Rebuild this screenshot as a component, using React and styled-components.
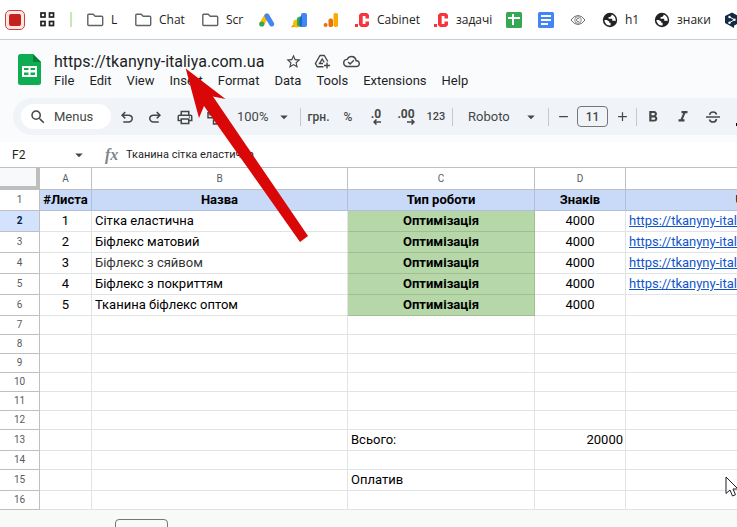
import React from 'react';
import styled, { createGlobalStyle, css } from 'styled-components';
import {
  MdSearch,
  MdStarBorder,
  MdOutlineCloudDone,
  MdArrowDropDown,
  MdFormatBold,
  MdFormatItalic,
  MdAdd,
  MdRemove,
} from 'react-icons/md';

const GlobalStyle = createGlobalStyle`
  * {
    box-sizing: border-box;
  }
  body {
    margin: 0;
    background: #f8faf7;
    font-family: Roboto, "Liberation Sans", sans-serif;
    overflow: hidden;
  }
  button, input {
    font-family: inherit;
  }
`;

const Page = styled.div`
  position: relative;
  display: flex;
  flex-direction: column;
  width: 100%;
  overflow: hidden;
`;

/* bookmarks */

const BookmarkBar = styled.nav`
  display: flex;
  align-items: center;
  height: 40px;
  padding-left: 5px;
  background: #fff;
  border-bottom: 1px solid #c9cfca;
  white-space: nowrap;
`;

const BarButton = styled.button`
  display: flex;
  flex: none;
  padding: 0;
  margin-right: 15px;
  background: none;
  border: 0;
  cursor: pointer;
`;

const BarDivider = styled.span`
  flex: none;
  width: 2px;
  height: 15px;
  margin-right: 15px;
  background: #c5e8b7;
`;

const Bookmark = styled.a`
  display: flex;
  flex: none;
  align-items: center;
  gap: 7px;
  width: ${(p) => p.$width || 32}px;
  color: #1f2220;
  font-family: "Open Sans", "Noto Sans", sans-serif;
  font-size: 12px;
  line-height: 16px;
  text-decoration: none;

  svg {
    flex: none;
  }
`;

/* document header */

const Header = styled.header`
  display: flex;
  height: 58px;
  padding: 12px 0 0 16px;
  background: #f9fbfd;
`;

const DocInfo = styled.div`
  display: flex;
  flex-direction: column;
  padding-left: 8px;
`;

const TitleRow = styled.div`
  display: flex;
  align-items: center;
  height: 19px;
  padding-left: 2px;
`;

const Title = styled.h1`
  min-width: 215px;
  margin: 0 16px 0 0;
  color: #1f1f1f;
  font-size: 16px;
  font-weight: 400;
  line-height: 19px;
`;

const TitleActions = styled.div`
  display: flex;
  gap: 12px;
  color: #444746;
`;

const MenuBar = styled.div`
  display: flex;
  height: 20px;
  gap: 15px;
  padding-left: 2px;
`;

const MenuItem = styled.button`
  padding: 0;
  background: none;
  border: 0;
  color: #1f1f1f;
  font-size: 13px;
  line-height: 18px;
  cursor: pointer;
`;

/* toolbar */

const ToolbarWrap = styled.div`
  padding: 0 0 7px 13px;
  background: #f9fbfd;
`;

const Toolbar = styled.div`
  display: flex;
  align-items: center;
  height: 37px;
  padding-left: 8px;
  background: #f0f4f9;
  border-radius: 19px 0 0 19px;
  color: #444746;
  overflow: hidden;
`;

const MenuSearch = styled.button`
  display: flex;
  flex: none;
  align-items: center;
  gap: 7px;
  width: 90px;
  height: 25px;
  margin-right: 2px;
  padding: 0 8px;
  background: #fff;
  border: 0;
  border-radius: 13px;
  color: #444746;
  font-size: 13px;
`;

const Tool = styled.button`
  display: flex;
  flex: none;
  align-items: center;
  justify-content: center;
  width: ${(p) => p.$width || 28}px;
  height: 28px;
  padding: 0;
  background: none;
  border: 0;
  color: #444746;
  font-size: ${(p) => p.$size || 13}px;
  font-weight: ${(p) => (p.$strong ? 500 : 400)};
  cursor: pointer;
`;

const DropTool = styled(Tool)`
  justify-content: space-between;
  padding: 0 ${(p) => p.$right}px 0 ${(p) => p.$left}px;
`;

const ToolDivider = styled.span`
  flex: none;
  width: 1px;
  height: 18px;
  background: #c7c7c7;
`;

const Decimal = styled.span`
  display: flex;
  flex-direction: column;
  align-items: flex-end;
  font-size: 12px;
  font-weight: 700;
  line-height: 10px;
`;

const SizeInput = styled.input`
  flex: none;
  width: 31px;
  height: 21px;
  padding: 0;
  background: transparent;
  border: 1px solid #747775;
  border-radius: 4px;
  color: #444746;
  font-size: 12px;
  font-weight: 500;
  text-align: center;
`;

const TextColor = styled.span`
  width: 14px;
  height: 3px;
  margin-top: 16px;
  background: #000;
`;

/* formula bar */

const FormulaBar = styled.div`
  display: flex;
  align-items: center;
  height: 26px;
  background: #fff;
  border-bottom: 1px solid #c0c0c0;
`;

const NameBox = styled.input`
  width: 70px;
  padding: 0 0 0 12px;
  background: none;
  border: 0;
  color: #1f1f1f;
  font-size: 12px;
`;

const FxLabel = styled.label`
  width: 38px;
  padding-left: 17px;
  color: #80868b;
  font-family: "Liberation Serif", serif;
  font-size: 16px;
  font-style: italic;
  font-weight: 700;
  line-height: 16px;
`;

const FormulaInput = styled.input`
  flex: 1;
  min-width: 0;
  padding: 0;
  background: none;
  border: 0;
  color: #1f1f1f;
  font-size: 11px;
`;

/* grid */

const GridWrap = styled.div`
  overflow: hidden;
`;

const Grid = styled.table`
  width: 870px;
  table-layout: fixed;
  border-collapse: separate;
  border-spacing: 0;
  background: #fff;
`;

const Corner = styled.th`
  height: 22px;
  padding: 0;
  background: #f8f9fa;
  border: solid #bdbfbe;
  border-width: 0 4px 4px 0;
`;

const ColHead = styled.th`
  padding: 0;
  border: solid #c0c0c0;
  border-width: 0 1px 1px 0;
  color: #575b5f;
  font-size: 10px;
  font-weight: 400;
`;

const RowHead = styled.th`
  height: ${(p) => p.$height}px;
  padding: 0;
  border: solid #c0c0c0;
  border-width: 0 1px 1px 0;
  background: ${(p) => (p.$active ? '#d3e3fd' : '#fff')};
  color: ${(p) => (p.$active ? '#041e49' : '#575b5f')};
  font-size: 10px;
  font-weight: ${(p) => (p.$active ? 700 : 400)};
  line-height: 12px;
`;

const Cell = styled.td`
  padding: 0 ${(p) => (p.$align === 'right' ? 2 : 3)}px 0 3px;
  border: solid #e2e3e3;
  border-width: 0 1px 1px 0;
  color: ${(p) => (p.$soft ? '#333' : '#000')};
  font-size: 13px;
  line-height: 16px;
  text-align: ${(p) => p.$align || 'left'};
  white-space: nowrap;
  overflow: hidden;

  ${(p) =>
    p.$kind === 'head' &&
    css`
      padding: 0;
      background: #c9daf8;
      border-color: #b1c0da;
      font-weight: 700;
      text-align: center;
    `}

  ${(p) =>
    p.$kind === 'work' &&
    css`
      background: #b6d7a8;
      border-color: #a0bd94;
      font-weight: 700;
      text-align: center;
    `}
`;

const CellLink = styled.a`
  color: #1155cc;
  text-decoration: underline;
`;

const SheetTabs = styled.footer`
  height: 40px;
  padding: 9px 0 0 115px;
  background: #f8faf7;
`;

const SheetTab = styled.button`
  display: block;
  width: 53px;
  height: 28px;
  background: none;
  border: 1px solid #747775;
  border-radius: 4px;
`;

/* drawn over the sheet */

const ArrowMark = styled.svg`
  position: absolute;
  top: 68px;
  left: 185px;
  pointer-events: none;
`;

const Cursor = styled.svg`
  position: absolute;
  top: 476px;
  left: 725px;
  pointer-events: none;
`;

const FolderIcon = () => (
  <svg width="17" height="16" viewBox="0 0 17 16" fill="none" stroke="#5f6361" strokeWidth="1.4">
    <path d="M.8 3.2q0-1 1-1h4.4l2 2h6.500q1 0 1 1v7.300q0 1-1 1H1.800q-1 0-1-1z" />
  </svg>
);

const RecordIcon = () => (
  <svg width="20" height="20" viewBox="0 0 20 20">
    <rect x=".5" y=".5" width="19" height="19" rx="4.500" fill="#fbe6e4" stroke="#c9403c" />
    <rect x="4" y="4" width="12" height="12" rx="2" fill="#c5221f" />
  </svg>
);

const AppsIcon = () => (
  <svg width="15" height="15" viewBox="0 0 15 15" fill="none" stroke="#1f2220" strokeWidth="1.700">
    <rect x="1" y="1" width="4" height="4" />
    <rect x="9.500" y="1" width="4" height="4" />
    <rect x="1" y="9.500" width="4" height="4" />
    <rect x="9.500" y="9.500" width="4" height="4" />
  </svg>
);

const AdsIcon = () => (
  <svg width="16" height="16" viewBox="0 0 16 16" strokeLinecap="round" strokeWidth="5">
    <path d="M3 11.700 7.500 4" stroke="#fbbc04" />
    <path d="M8 4l4.700 8" stroke="#4285f4" />
    <circle cx="2.800" cy="12" r="2.600" fill="#34a853" />
  </svg>
);

const KeywordIcon = () => (
  <svg width="16" height="16" viewBox="0 0 16 16">
    <path d="M10 3q0-2 2-2h2q2 0 2 2v10q0 2-2 2h-4z" fill="#4285f4" />
    <path d="M0 15.500 2.500 12l2 2.500z" fill="#ea8600" />
    <circle cx="6" cy="11.500" r="4" fill="#fbbc04" />
    <path d="M6 6q2-2 5-1.800V14q-2 1.500-5-.5z" fill="#34a853" />
    <path d="M9.500 4.500h1.500v10H9q-1.500-4 .500-10z" fill="#1967d2" />
  </svg>
);

const AnalyticsIcon = () => (
  <svg width="16" height="16" viewBox="0 0 16 16">
    <rect x="10.500" y="1" width="4.500" height="14" rx="1.800" fill="#f9ab00" />
    <rect x="5.500" y="6.500" width="4.500" height="8.500" rx="1.800" fill="#e8710a" />
    <circle cx="2.600" cy="13" r="2" fill="#e37400" />
  </svg>
);

const CrmIcon = () => (
  <svg width="16" height="16" viewBox="0 0 16 16" fill="#f8333c">
    <rect x="1" y="12" width="3" height="3" />
    <path d="M7 1h6l2 2v3.500h-3.500V4H8.700v8h2.800V9.500H15V13l-2 2H7l-2-2V3z" />
  </svg>
);

const SheetsMiniIcon = () => (
  <svg width="16" height="16" viewBox="0 0 16 16">
    <rect width="16" height="16" rx="1.500" fill="#34a853" />
    <path d="M6 2h2v3h6v2H8v6H6V7H2V5h4z" fill="#fff" />
  </svg>
);

const DocsMiniIcon = () => (
  <svg width="16" height="16" viewBox="0 0 16 16">
    <rect width="16" height="16" rx="1.500" fill="#4285f4" />
    <path d="M3 3h10v2H3zm0 4h10v2H3zm0 4h7v2H3z" fill="#fff" />
  </svg>
);

const EyeIcon = () => (
  <svg width="16" height="16" viewBox="0 0 16 16" fill="none" stroke="#6b6e6c">
    <path d="M1 8q3-4.500 7-4.500T15 8q-3 4.500-7 4.500T1 8z" />
    <circle cx="8" cy="8" r="3.300" strokeWidth=".8" />
    <path d="M9.300 7a1.600 1.600 0 1 0 0 2" strokeWidth=".9" />
  </svg>
);

const GlobeIcon = () => (
  <svg width="16" height="16" viewBox="0 0 16 16">
    <circle cx="8" cy="8" r="7.200" fill="#202124" />
    <path
      d="M2.300 8h2.500l2.400 1.500v1.300H8.600v2.800Q3 13.500 2.300 8zM9.500 2.500v1.300L8 5H6.600v1.700h3.600v2h2.300l1.100.5Q14.200 4 9.500 2.500z"
      fill="#fff"
    />
  </svg>
);

const DeeplIcon = () => (
  <svg width="16" height="16" viewBox="0 0 16 16">
    <path d="M8 .5 14.500 4v7.200L10 13.700V16l-3.500-2L1 11V4z" fill="#0f2b46" />
    <path d="m5.500 5 5 2.700-5 3" fill="none" stroke="#fff" />
    <g fill="#fff">
      <circle cx="5.500" cy="5" r="1.200" />
      <circle cx="10.500" cy="7.800" r="1.200" />
      <circle cx="5.500" cy="10.700" r="1.200" />
    </g>
  </svg>
);

const SheetsLogo = () => (
  <svg width="28" height="34" viewBox="0 0 28 34">
    <path d="M4.500 2H17l8 8v20.500q0 2.500-2.500 2.500h-18Q2 33 2 30.500v-26Q2 2 4.500 2z" fill="#0fad52" />
    <path d="M17 2l8 8h-8z" fill="#087f36" />
    <path
      d="M6 14h15v11H6zm2 2v2h4.500v-2zm6.500 0v2H19v-2zM8 20.500v2.500h4.500v-2.500zm6.500 0v2.500H19v-2.500z"
      fill="#fff"
      fillRule="evenodd"
    />
  </svg>
);

const DriveAddIcon = () => (
  <svg width="17" height="17" viewBox="0 0 17 17" fill="none" stroke="currentColor" strokeWidth="1.400">
    <path d="M9.500 13.800H3.300L1.400 10.500 6 2.500h4.300l3.500 6" strokeLinejoin="round" />
    <path d="M9 10.500H5.500L8.200 6l2 3.300" />
    <path d="M13 9.500v6M10 12.500h6" />
  </svg>
);

const Symbol = ({ d }) => (
  <svg width="18" height="18" viewBox="0 -980 960 960" fill="currentColor">
    <path d={d} />
  </svg>
);

const UNDO =
  'M280-200v-80h284q63 0 109.500-40T720-420q0-60-46.500-100T564-560H312l104 104-56 56-200-200 200-200 56 56-104 104h252q97 0 166.500 63T800-420q0 94-69.500 157T564-200H280Z';
const REDO =
  'M396-200q-97 0-166.500-63T160-420q0-94 69.500-157T396-640h252L544-744l56-56 200 200-200 200-56-56 104-104H396q-63 0-109.500 40T240-420q0 60 46.500 100T396-280h284v80H396Z';
const PRINT =
  'M640-640v-120H320v120h-80v-200h480v200h-80Zm-480 80h640-640Zm560 100q17 0 28.500-11.500T760-500q0-17-11.500-28.500T720-540q-17 0-28.500 11.500T680-500q0 17 11.500 28.500T720-460Zm-80 260v-160H320v160h320Zm80 80H240v-160H80v-240q0-51 35-85.500t85-34.500h560q51 0 85.500 34.500T880-520v240H720v160Zm80-240v-160q0-17-11.500-28.500T760-560H200q-17 0-28.500 11.500T160-520v160h80v-80h480v80h80Z';

const PaintIcon = () => (
  <svg width="18" height="18" viewBox="0 0 18 18" fill="none" stroke="currentColor" strokeWidth="1.500">
    <path d="M4 2.700h10v4H4zM4 4.700H2v5h7v2M7.500 12h3v4h-3z" />
  </svg>
);

const StrikeIcon = () => (
  <svg width="16" height="16" viewBox="0 0 16 16" fill="none" stroke="currentColor" strokeWidth="1.600">
    <path d="M1 8h14" />
    <path d="M11.500 5.500Q11 3 8 3T4.700 5.800M4.500 10.500Q5 13 8 13t3.500-3" />
  </svg>
);

const TinyArrow = ({ right }) => (
  <svg width="8" height="6" viewBox="0 0 8 6" fill="none" stroke="currentColor" strokeWidth="1.500">
    <path d={right ? 'M0 3h7M4.500.5 7 3 4.500 5.500' : 'M8 3H1M3.500.5 1 3l2.500 2.500'} />
  </svg>
);

const bookmarks = [
  { icon: FolderIcon, label: 'L', width: 48 },
  { icon: FolderIcon, label: 'Chat', width: 67 },
  { icon: FolderIcon, label: 'Scr', width: 57 },
  { icon: AdsIcon, name: 'Ads' },
  { icon: KeywordIcon, name: 'Keywords' },
  { icon: AnalyticsIcon, name: 'Analytics', width: 31 },
  { icon: CrmIcon, label: 'Cabinet', width: 79 },
  { icon: CrmIcon, label: 'задачі', width: 73 },
  { icon: SheetsMiniIcon, name: 'Sheets' },
  { icon: DocsMiniIcon, name: 'Docs' },
  { icon: EyeIcon, name: 'Copyright check' },
  { icon: GlobeIcon, label: 'h1', width: 52 },
  { icon: GlobeIcon, label: 'знаки', width: 70 },
  { icon: DeeplIcon, name: 'DeepL' },
];

const menus = ['File', 'Edit', 'View', 'Insert', 'Format', 'Data', 'Tools', 'Extensions', 'Help'];

const site = 'https://tkanyny-italiya.com.ua';

const tasks = [
  { name: 'Сітка еластична', link: true },
  { name: 'Біфлекс матовий', link: true },
  { name: 'Біфлекс з сяйвом', link: true, soft: true },
  { name: 'Біфлекс з покриттям', link: true },
  { name: 'Тканина біфлекс оптом', link: false },
];

const emptyRows = [
  { n: 7 },
  { n: 8 },
  { n: 9 },
  { n: 10 },
  { n: 11 },
  { n: 12 },
  { n: 13, height: 21, label: 'Всього:', value: '20000' },
  { n: 14 },
  { n: 15, height: 21, label: 'Оплатив' },
  { n: 16 },
];

const Bookmarks = () => (
  <BookmarkBar>
    <BarButton aria-label="Record">
      <RecordIcon />
    </BarButton>
    <BarButton aria-label="Apps">
      <AppsIcon />
    </BarButton>
    <BarDivider />
    {bookmarks.map(({ icon: Icon, label, name, width }, i) => (
      <Bookmark key={i} href="#" aria-label={name} $width={width}>
        <Icon />
        {label}
      </Bookmark>
    ))}
  </BookmarkBar>
);

const Tools = () => (
  <ToolbarWrap>
    <Toolbar>
      <MenuSearch>
        <MdSearch size={18} />
        Menus
      </MenuSearch>
      <Tool aria-label="Undo">
        <Symbol d={UNDO} />
      </Tool>
      <Tool aria-label="Redo">
        <Symbol d={REDO} />
      </Tool>
      <Tool aria-label="Print" $width={32}>
        <Symbol d={PRINT} />
      </Tool>
      <Tool aria-label="Paint format">
        <PaintIcon />
      </Tool>
      <DropTool $width={71} $left={8} $right={7}>
        100%
        <MdArrowDropDown size={18} />
      </DropTool>
      <ToolDivider />
      <Tool $width={35} $size={12} $strong>
        грн.
      </Tool>
      <Tool $width={24} $size={12} $strong>
        %
      </Tool>
      <Tool $width={32} aria-label="Decrease decimals">
        <Decimal>
          .0
          <TinyArrow />
        </Decimal>
      </Tool>
      <Tool aria-label="Increase decimals">
        <Decimal>
          .00
          <TinyArrow right />
        </Decimal>
      </Tool>
      <Tool $width={32} $size={11} $strong>
        123
      </Tool>
      <ToolDivider />
      <DropTool $width={95} $left={15} $right={8}>
        Roboto
        <MdArrowDropDown size={18} />
      </DropTool>
      <ToolDivider />
      <Tool aria-label="Smaller">
        <MdRemove size={15} />
      </Tool>
      <SizeInput aria-label="Font size" defaultValue="11" />
      <Tool aria-label="Larger">
        <MdAdd size={15} />
      </Tool>
      <ToolDivider />
      <Tool $width={32} aria-label="Bold">
        <MdFormatBold size={18} />
      </Tool>
      <Tool aria-label="Italic">
        <MdFormatItalic size={18} />
      </Tool>
      <Tool $width={32} aria-label="Strikethrough">
        <StrikeIcon />
      </Tool>
      <Tool aria-label="Text color">
        <TextColor />
      </Tool>
    </Toolbar>
  </ToolbarWrap>
);

const Sheet = () => (
  <GridWrap>
    <Grid>
      <colgroup>
        <col width="40" />
        <col width="52" />
        <col width="256" />
        <col width="187" />
        <col width="91" />
        <col width="244" />
      </colgroup>
      <thead>
        <tr>
          <Corner aria-label="Select all" />
          {['A', 'B', 'C', 'D', 'E'].map((c) => (
            <ColHead key={c}>{c}</ColHead>
          ))}
        </tr>
      </thead>
      <tbody>
        <tr>
          <RowHead $height={21}>1</RowHead>
          {['#Листа', 'Назва', 'Тип роботи', 'Знаків', 'URL'].map((t) => (
            <Cell key={t} $kind="head">
              {t}
            </Cell>
          ))}
        </tr>
        {tasks.map((task, i) => (
          <tr key={task.name}>
            <RowHead $height={21} $active={i === 0}>
              {i + 2}
            </RowHead>
            <Cell $align="center">{i + 1}</Cell>
            <Cell $soft={task.soft}>{task.name}</Cell>
            <Cell $kind="work">Оптимізація</Cell>
            <Cell $align="center">4000</Cell>
            <Cell>{task.link && <CellLink href="#">{site}/</CellLink>}</Cell>
          </tr>
        ))}
        {emptyRows.map(({ n, height = 19, label, value }) => (
          <tr key={n}>
            <RowHead $height={height}>{n}</RowHead>
            <Cell />
            <Cell />
            <Cell>{label}</Cell>
            <Cell $align="right">{value}</Cell>
            <Cell />
          </tr>
        ))}
      </tbody>
    </Grid>
  </GridWrap>
);

const App = () => {
  return (
    <Page>
      <GlobalStyle />
      <Bookmarks />
      <Header>
        <SheetsLogo />
        <DocInfo>
          <TitleRow>
            <Title>{site}</Title>
            <TitleActions>
              <MdStarBorder size={17} />
              <DriveAddIcon />
              <MdOutlineCloudDone size={17} />
            </TitleActions>
          </TitleRow>
          <MenuBar>
            {menus.map((m) => (
              <MenuItem key={m}>{m}</MenuItem>
            ))}
          </MenuBar>
        </DocInfo>
      </Header>
      <Tools />
      <FormulaBar>
        <NameBox aria-label="Name box" defaultValue="F2" />
        <MdArrowDropDown size={18} color="#444746" />
        <FxLabel htmlFor="formula">fx</FxLabel>
        <FormulaInput id="formula" defaultValue="Тканина сітка еластична" />
      </FormulaBar>
      <Sheet />
      <SheetTabs>
        <SheetTab aria-label="Sheet tab" />
      </SheetTabs>
      <ArrowMark width="124" height="175" viewBox="0 0 124 175">
        <path d="M.7.500 40.500 31 28 28.500 123 168l-8 6L19 38l-5 12z" fill="#d90707" />
      </ArrowMark>
      <Cursor width="14" height="22" viewBox="0 0 14 22">
        <path d="M1 1v16.500l4-3.500 2.500 6 3-1.300-2.500-5.700h5z" fill="#fff" stroke="#1c1c28" />
      </Cursor>
    </Page>
  );
};

export default App;
